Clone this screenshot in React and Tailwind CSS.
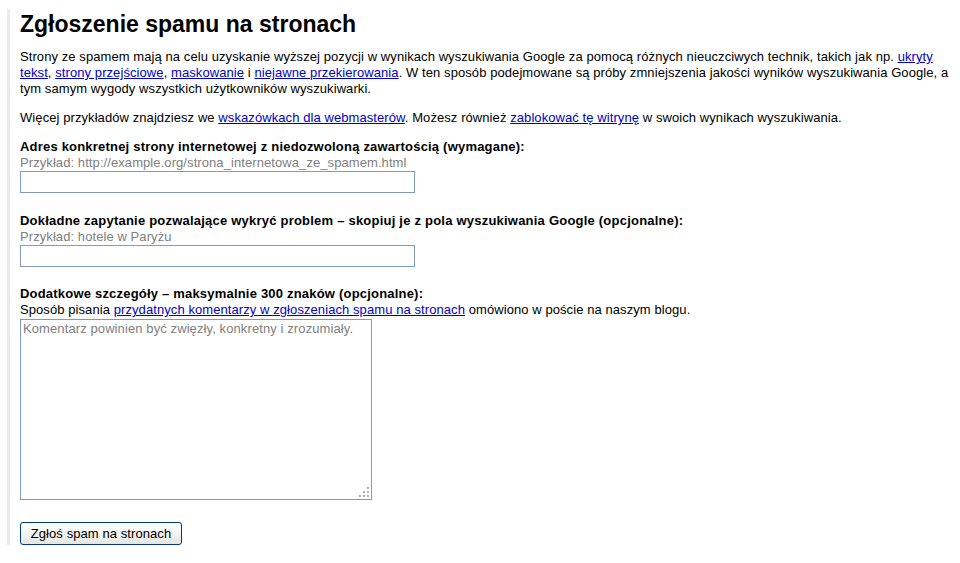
export default function App() {
  const link = "text-[#0000cc] underline";
  return (
    <div className="bg-white min-h-[563px] font-['Liberation_Sans',Arial,sans-serif] text-[13px] leading-[16px] tracking-[0.08px] text-black">
      <div className="pt-[9px] pl-[7px]">
        <div className="border-l-[3px] border-[#ebebeb] pl-[10px] w-[948px]">
          <h1 className="text-[23px] leading-[28px] font-bold tracking-normal pt-[1px] mb-[11px]">Zgłoszenie spamu na stronach</h1>
          <p className="mb-[13px]">
            Strony ze spamem mają na celu uzyskanie wyższej pozycji w wynikach wyszukiwania Google za pomocą różnych nieuczciwych technik, takich jak np. <a className={link}>ukryty tekst</a>, <a className={link}>strony przejściowe</a>, <a className={link}>maskowanie</a> i <a className={link}>niejawne przekierowania</a>. W ten sposób podejmowane są próby zmniejszenia jakości wyników wyszukiwania Google, a tym samym wygody wszystkich użytkowników wyszukiwarki.
          </p>
          <p className="mb-[13px]">
            Więcej przykładów znajdziesz we <a className={link}>wskazówkach dla webmasterów</a>. Możesz również <a className={link}>zablokować tę witrynę</a> w swoich wynikach wyszukiwania.
          </p>
          <div className="font-bold tracking-[0.2px]">Adres konkretnej strony internetowej z niedozwoloną zawartością (wymagane):</div>
          <div className="text-[#808080]">Przykład: http://example.org/strona_internetowa_ze_spamem.html</div>
          <input type="text" className="block w-[395px] h-[22px] border border-[#7f9db9] bg-white outline-none px-[2px]" />
          <div className="font-bold tracking-[0.22px] mt-[20px]">Dokładne zapytanie pozwalające wykryć problem – skopiuj je z pola wyszukiwania Google (opcjonalne):</div>
          <div className="text-[#808080]">Przykład: hotele w Paryżu</div>
          <input type="text" className="block w-[395px] h-[22px] border border-[#7f9db9] bg-white outline-none px-[2px]" />
          <div className="font-bold tracking-[0.2px] mt-[19px]">Dodatkowe szczegóły – maksymalnie 300 znaków (opcjonalne):</div>
          <div>
            Sposób pisania <a className={link}>przydatnych komentarzy w zgłoszeniach spamu na stronach</a> omówiono w poście na naszym blogu.
          </div>
          <div className="relative mt-[1px] w-[352px] h-[181px]">
            <textarea
              placeholder="Komentarz powinien być zwięzły, konkretny i zrozumiały."
              className="block w-full h-full border border-[#7f9db9] bg-white outline-none px-[2px] py-[1px] text-[13px] leading-[16px] tracking-[0.1px] font-['Liberation_Sans',Arial,sans-serif] placeholder:text-[#808080] resize-none"
            />
            <div className="absolute right-[3px] bottom-[3px] grid grid-cols-3 gap-[2px] pointer-events-none">
              <span className="w-[2px] h-[2px]" />
              <span className="w-[2px] h-[2px]" />
              <span className="w-[2px] h-[2px] bg-[#b4b4b4]" />
              <span className="w-[2px] h-[2px]" />
              <span className="w-[2px] h-[2px] bg-[#b4b4b4]" />
              <span className="w-[2px] h-[2px] bg-[#b4b4b4]" />
              <span className="w-[2px] h-[2px] bg-[#b4b4b4]" />
              <span className="w-[2px] h-[2px] bg-[#b4b4b4]" />
              <span className="w-[2px] h-[2px] bg-[#b4b4b4]" />
            </div>
          </div>
          <div className="pt-[22px]">
            <button className="block w-[162px] h-[23px] border border-[#003c74] rounded-[3px] bg-gradient-to-b from-[#ffffff] to-[#e6e6e0] text-[13px] leading-[16px] text-black">
              Zgłoś spam na stronach
            </button>
          </div>
        </div>
      </div>
    </div>
  );
}
